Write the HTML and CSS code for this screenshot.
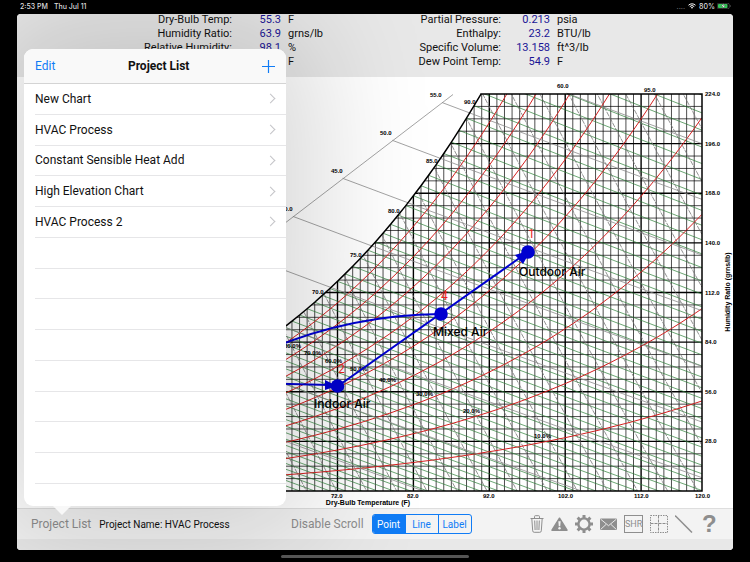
FILE: index.html
```html
<!DOCTYPE html>
<html lang="en">
<head>
    <meta charset="UTF-8">
    <meta name="viewport" content="width=device-width, initial-scale=1.0">
    <title>Psychrometric Chart</title>
    <link rel="stylesheet" href="styles.css">
    <script src="chart.js" defer></script>
</head>
<body>

<div class="status-bar">
    <span>2:53 PM</span>
    <span>Thu Jul 11</span>
    <span class="signal">....</span>
    <svg class="wifi" viewBox="0 0 16 12" aria-hidden="true">
        <path d="M1 4.5a10 10 0 0 1 14 0M3.5 7.2a6.4 6.4 0 0 1 9 0" fill="none" stroke="#fff" stroke-width="2"/>
        <path d="M5.6 9.2a3.4 3.4 0 0 1 4.8 0L8 11.7z" fill="#fff"/>
    </svg>
    <span>80%</span>
    <svg class="battery" viewBox="0 0 28 12" aria-hidden="true">
        <rect x="0.5" y="0.5" width="24" height="11" rx="3" fill="none" stroke="#777"/>
        <rect x="2" y="2" width="19" height="8" rx="1.5" fill="#35c759"/>
        <path d="M26 4v4a2.5 2.5 0 0 0 0-4z" fill="#777"/>
        <path d="M14 0.5L8 6.8h4L10.5 11.5 17 5.2h-4z" fill="#fff" stroke="#000" stroke-width="0.6"/>
    </svg>
</div>

<main class="app">
    <header class="readout">
        <table class="readings">
            <tr><th scope="row">Dry-Bulb Temp:</th><td class="value">55.3</td><td class="unit">F</td></tr>
            <tr><th scope="row">Humidity Ratio:</th><td class="value">63.9</td><td class="unit">grns/lb</td></tr>
            <tr><th scope="row">Relative Humidity:</th><td class="value">98.1</td><td class="unit">%</td></tr>
            <tr><td></td><td class="value"></td><td class="unit">F</td></tr>
        </table>
        <table class="readings readings-right">
            <tr><th scope="row">Partial Pressure:</th><td class="value">0.213</td><td class="unit">psia</td></tr>
            <tr><th scope="row">Enthalpy:</th><td class="value">23.2</td><td class="unit">BTU/lb</td></tr>
            <tr><th scope="row">Specific Volume:</th><td class="value">13.158</td><td class="unit">ft^3/lb</td></tr>
            <tr><th scope="row">Dew Point Temp:</th><td class="value">54.9</td><td class="unit">F</td></tr>
        </table>
    </header>

    <section class="chart-area">
        <svg id="chart" class="chart" viewBox="17 77 716 431" role="img" aria-label="Psychrometric chart">
            <defs>
                <clipPath id="inside"><path id="insidePath"/></clipPath>
            </defs>
            <!-- lines are filled in by chart.js -->
            <g clip-path="url(#inside)">
                <path id="gridMinor" class="grid-minor"/>
                <path id="gridMajor" class="grid-major"/>
                <path id="wetBulb" class="wet-bulb"/>
                <path id="volume" class="volume"/>
                <path id="humidity" class="humidity"/>
            </g>
            <path id="enthalpy" class="enthalpy"/>
            <path class="enthalpy-axis" d="M193 293.5L453 94.5"/>
            <path id="border" class="border"/>
            <g id="labels" class="labels"></g>
            <text class="axis-title" x="368" y="505" text-anchor="middle">Dry-Bulb Temperature (F)</text>
            <text class="axis-title" transform="translate(730 292) rotate(-90)" text-anchor="middle">Humidity Ratio (grns/lb)</text>

            <!-- process -->
            <g class="process">
                <path d="M338 386L528 252"/>
                <path d="M270 349Q350 315 441 314"/>
                <path d="M270 383.5L330 385"/>
            </g>
            <g class="process-points">
                <path d="M515 255l8 9 8-14z"/>
                <path d="M325 380v10l12-4z"/>
                <circle cx="528" cy="252" r="6.8"/>
                <circle cx="441" cy="314" r="6.8"/>
                <circle cx="337.5" cy="386" r="6.8"/>
            </g>
            <g class="point-number">
                <text x="528" y="238">1</text>
                <text x="441" y="300">4</text>
                <text x="338" y="373">2</text>
            </g>
            <g class="point-name">
                <text x="519" y="276">Outdoor Air</text>
                <text x="433" y="336">Mixed Air</text>
                <text x="314" y="408">Indoor Air</text>
            </g>
        </svg>
    </section>

    <footer class="toolbar">
        <div class="project">
            <button class="text-button" type="button">Project List</button>
            <span class="project-name">Project Name: HVAC Process</span>
        </div>
        <button class="text-button" type="button">Disable Scroll</button>
        <div class="segmented">
            <button class="segment selected" type="button">Point</button>
            <button class="segment" type="button">Line</button>
            <button class="segment" type="button">Label</button>
        </div>
        <div class="tools">
            <button type="button" aria-label="Delete">
                <svg width="14" height="18" viewBox="0 0 14 18" fill="none" stroke="#8e8e8e">
                    <path d="M0.5 3.5h13M4.5 3.5V1.5q0-.8.8-.8h3.4q.8 0 .8.8v2M1.8 3.5l.9 12.3q.1 1.5 1.5 1.5h5.6q1.4 0 1.5-1.5l.9-12.3"/>
                    <path d="M4.7 5.5l.4 9.5M7 5.5V15M9.3 5.5L8.9 15"/>
                </svg>
            </button>
            <button type="button" aria-label="Warnings">
                <svg width="17" height="18" viewBox="0 0 17 18">
                    <path d="M8.5 3.2L16 15.2H1z" fill="#8e8e8e" stroke="#8e8e8e" stroke-width="1.5" stroke-linejoin="round"/>
                    <path d="M7.3 6.2h2.4l-.5 5.1H7.8z" fill="#f3f3f3"/>
                    <circle cx="8.5" cy="13.3" r="1.2" fill="#f3f3f3"/>
                </svg>
            </button>
            <button type="button" aria-label="Settings">
                <svg width="18" height="18" viewBox="0 0 18 18" stroke="#8e8e8e" fill="none">
                    <circle cx="9" cy="9" r="5.6" stroke-width="2.4"/>
                    <path stroke-width="3" d="M9 0v3M9 15v3M0 9h3M15 9h3M2.6 2.6l2.2 2.2M13.2 13.2l2.2 2.2M2.6 15.4l2.2-2.2M13.2 4.8l2.2-2.2"/>
                </svg>
            </button>
            <button type="button" aria-label="Mail">
                <svg width="17" height="18" viewBox="0 0 17 18">
                    <rect x="0" y="3.5" width="17" height="11.5" rx="1" fill="#8e8e8e"/>
                    <path d="M.8 4.3l7.7 6.4 7.7-6.4M.8 14.3l5.4-5M16.2 14.3l-5.4-5" fill="none" stroke="#f3f3f3" stroke-width=".9"/>
                </svg>
            </button>
            <button class="shr" type="button">SHR</button>
            <button type="button" aria-label="Grid">
                <svg width="18" height="18" viewBox="0 0 18 18" fill="none" stroke="#8e8e8e">
                    <path stroke-dasharray="1.5 1" d="M.5.5h17v17H.5z"/>
                    <path stroke-dasharray="3 1" d="M8.5 .5v17M.5 8.5h17"/>
                </svg>
            </button>
            <button type="button" aria-label="Draw line">
                <svg width="20" height="18" viewBox="0 0 20 18"><path d="M0 .5l17 17" stroke="#8e8e8e" stroke-width="1.5"/></svg>
            </button>
            <button class="help" type="button">?</button>
        </div>
    </footer>

    <aside class="popover">
        <div class="popover-header">
            <button class="edit" type="button">Edit</button>
            <h1>Project List</h1>
            <button class="add" type="button" aria-label="Add project">
                <svg width="13" height="13" viewBox="0 0 13 13"><path d="M6.5 0v13M0 6.5h13" stroke="#107cf6" stroke-width="1.2"/></svg>
            </button>
        </div>
        <ul class="project-list">
            <li><a href="#">New Chart</a></li>
            <li><a href="#">HVAC Process</a></li>
            <li><a href="#">Constant Sensible Heat Add</a></li>
            <li><a href="#">High Elevation Chart</a></li>
            <li><a href="#">HVAC Process 2</a></li>
            <li></li>
            <li></li>
            <li></li>
            <li></li>
            <li></li>
            <li></li>
            <li></li>
            <li></li>
        </ul>
    </aside>
</main>

<div class="home-indicator"></div>

</body>
</html>
```
FILE: styles.css
```css
* {
    box-sizing: border-box;
}

body {
    margin: 0;
    min-height: 100vh;
    background: #000;
    font-family: Roboto, "Liberation Sans", sans-serif;
    color: #111;
    display: flex;
    flex-direction: column;
}

button {
    padding: 0;
    border: none;
    background: none;
    font-family: inherit;
    color: #8e8e8e;
}

svg {
    display: block;
}

/* status bar */
.status-bar {
    height: 14px;
    padding: 0 19px 2px 20px;
    display: flex;
    align-items: center;
    gap: 6px;
    font-family: Inter, "Liberation Sans", sans-serif;
    font-size: 7px;
    font-weight: 500;
    color: #ddd;
}

.signal {
    margin-left: auto;
    color: #777;
}

.wifi {
    width: 8px;
    margin: 0 -3px;
}

.battery {
    width: 14px;
    margin-left: -4px;
}

/* app window */
.app {
    position: relative;
    flex: 1;
    margin: 0 17px;
    background: #fff;
    border-radius: 4px;
    overflow: hidden;
    display: flex;
    flex-direction: column;
}

.readout {
    height: 63px;
    display: flex;
    background: #e8e8e8;
}

.readings {
    width: 50%;
    height: 56px;
    table-layout: fixed;
    border-collapse: collapse;
    font-size: 11px;
    line-height: 11px;
}

.readings th,
.readings td {
    height: 14px;
    padding: 0;
    font-weight: 400;
    text-align: right;
    vertical-align: top;
    white-space: nowrap;
}

.readings th {
    width: 215px;
}

.readings-right th {
    width: 126px;
}

.readings .value {
    width: 49px;
    color: #1a1596;
}

.readings .unit {
    padding-left: 7px;
    text-align: left;
}

/* chart */
.chart-area {
    flex: 1;
}

.chart {
    width: 100%;
}

.chart path {
    fill: none;
}

#insidePath {
    fill: #000;
}

.grid-minor {
    stroke: #000;
    stroke-width: 0.7;
}

.grid-major {
    stroke: #000;
    stroke-width: 1.4;
}

.wet-bulb {
    stroke: #2c8038;
    stroke-width: 0.7;
}

.volume {
    stroke: #777;
    stroke-width: 0.8;
    stroke-dasharray: 5 1;
}

.enthalpy,
.enthalpy-axis {
    stroke: #8b8b8b;
    stroke-width: 0.8;
}

.humidity {
    stroke: #d42020;
    stroke-width: 1;
}

.border {
    stroke: #000;
    stroke-width: 1.5;
}

.labels {
    font: bold 6px "Liberation Sans", sans-serif;
}

.axis-title {
    font: bold 7px "Liberation Sans", sans-serif;
}

.process path {
    stroke: #0000d0;
    stroke-width: 2;
}

.chart .process-points path,
.process-points circle {
    fill: #0000d0;
}

.point-number {
    font-size: 12px;
    fill: #ee2222;
}

.point-name {
    font-family: Inter, "Liberation Sans", sans-serif;
    font-size: 12px;
    font-weight: 500;
}

/* toolbar */
.toolbar {
    height: 42px;
    padding: 0 18px 0 14px;
    display: flex;
    align-items: center;
    background: #f3f3f3;
    border-top: 1px solid #dedede;
    border-bottom: 11px solid #e8e8e8;
}

.project {
    width: 260px;
    display: flex;
    align-items: center;
    gap: 8px;
}

.text-button {
    font-size: 12px;
}

.project-name {
    font-size: 10px;
}

.segmented {
    width: 100px;
    height: 20px;
    margin-left: 8px;
    display: flex;
    border: 1px solid #107cf6;
    border-radius: 3px;
    overflow: hidden;
}

.segment {
    flex: 1;
    font-size: 10px;
    color: #107cf6;
}

.segment + .segment {
    border-left: 1px solid #107cf6;
}

.segment.selected {
    background: #107cf6;
    color: #fff;
}

.tools {
    margin-left: auto;
    display: flex;
    align-items: center;
    gap: 7px;
}

.shr {
    width: 19px;
    height: 18px;
    border: 1px solid #8e8e8e;
    font-size: 9px;
}

.help {
    width: 13px;
    font-family: "Liberation Sans", sans-serif;
    font-size: 24px;
    line-height: 24px;
    font-weight: bold;
}

/* popover */
.popover {
    position: absolute;
    top: 35px;
    bottom: 44px;
    left: 7px;
    width: 262px;
    display: flex;
    flex-direction: column;
    background: #fff;
    border-radius: 9px;
    box-shadow: 0 0 120px 30px rgba(0, 0, 0, 0.16);
}

.popover::after {
    content: "";
    position: absolute;
    top: 100%;
    left: 29px;
    border: 9px solid transparent;
    border-top-color: #f8f8f8;
    border-bottom: none;
}

.popover-header {
    height: 35px;
    padding: 0 11px;
    display: flex;
    align-items: center;
    justify-content: space-between;
    background: #f9f9f9;
    border-bottom: 1px solid #d4d4d4;
    border-radius: 9px 9px 0 0;
}

.popover-header h1 {
    margin: 0;
    font-size: 12px;
    font-weight: 700;
}

.edit {
    font-size: 12px;
    color: #107cf6;
}

.project-list {
    flex: 1;
    margin: 0;
    padding: 0 0 22px 11px;
    list-style: none;
    display: flex;
    flex-direction: column;
}

.project-list li {
    flex: 1;
    display: flex;
    align-items: center;
    border-bottom: 1px solid #e6e6e8;
}

.project-list a {
    flex: 1;
    display: flex;
    align-items: center;
    justify-content: space-between;
    padding-right: 12px;
    font-size: 12px;
    color: #111;
    text-decoration: none;
}

.project-list a::after {
    content: "";
    width: 6px;
    height: 6px;
    border: solid #c4c4c8;
    border-width: 1px 1px 0 0;
    transform: rotate(45deg);
}

.home-indicator {
    width: 188px;
    height: 3px;
    margin: 5px auto 4px;
    border-radius: 2px;
    background: #555;
}
```
FILE: chart.js
```js
const P = 14.696; // sea level pressure, psia
const X72 = 337.5, PX_F = 7.59;
const BOTTOM = 491, TOP = 94, RIGHT = 702;
const PX_GR = (BOTTOM - TOP) / 224;

const px = t => X72 + (t - 72) * PX_F;
const tempAt = x => 72 + (x - X72) / PX_F;
const py = w => BOTTOM - w * 7000 * PX_GR;

// saturation pressure of water, t in F
function satPressure(t) {
    const r = t + 459.67;
    return Math.exp(-10440.397 / r - 11.29465 - 0.027022355 * r + 1.289036e-5 * r * r
        - 2.4780681e-9 * r * r * r + 6.5459673 * Math.log(r));
}

function ratio(t, rh) {
    const pw = satPressure(t) * rh;
    return 0.62198 * pw / (P - pw);
}

function curve(from, to, fn, step = 1) {
    const pts = [];
    for (let t = from; t < to; t += step) {
        pts.push(px(t).toFixed(1) + " " + py(fn(t)).toFixed(1));
    }
    pts.push(px(to).toFixed(1) + " " + py(fn(to)).toFixed(1));
    return "M" + pts.join("L");
}

function draw(id, d) {
    document.getElementById(id).setAttribute("d", d);
}

const tSat = tempAt(481);
const saturation = curve(35, tSat, t => ratio(t, 1));
const outline = saturation + `L481 ${TOP}H${RIGHT}V${BOTTOM}H${px(35)}Z`;
draw("insidePath", outline);
draw("border", outline);

// temperature and humidity ratio grid
let minor = "", major = "";
for (let t = 36; t < 120; t++) {
    const line = `M${px(t)} ${TOP}V${BOTTOM}`;
    if (t % 10 === 2) major += line; else minor += line;
}
for (let g = 7; g < 224; g += 7) {
    const line = `M${px(35)} ${BOTTOM - g * PX_GR}H${RIGHT}`;
    if (g % 28 === 0) major += line; else minor += line;
}
draw("gridMinor", minor);
draw("gridMajor", major);

// relative humidity
let rhLines = "";
for (let rh = 1; rh < 10; rh++) {
    rhLines += curve(35, 120, t => ratio(t, rh / 10));
}
draw("humidity", rhLines);

// wet bulb
let wbLines = "";
for (let wb = 36; wb < 100; wb++) {
    const ws = ratio(wb, 1);
    wbLines += curve(wb, 120, t => ((1093 - 0.556 * wb) * ws - 0.24 * (t - wb)) / (1093 + 0.444 * t - wb), 10);
}
draw("wetBulb", wbLines);

// specific volume
let volLines = "";
for (let v = 125; v < 156; v++) {
    const w = t => (v / 10 * P / (0.370486 * (t + 459.67)) - 1) / 1.607858;
    volLines += curve(35, 120, w, 5);
}
draw("volume", volLines);

// enthalpy, starts on the slanted axis
let hLines = "";
for (let h = 20; h <= 60; h += 5) {
    const w = t => (h - 0.24 * t) / (1061 + 0.444 * t);
    const start = h === 60 ? 102.2 : tempAt(442 - (55 - h) * 9.94);
    const end = Math.min(120, h / 0.24);
    hLines += curve(start, end, w, 10);
}
draw("enthalpy", hLines);

const labels = [
    ["224.0", 705, 96], ["196.0", 705, 146], ["168.0", 705, 195], ["140.0", 705, 245],
    ["112.0", 705, 295], ["84.0", 705, 344], ["56.0", 705, 394], ["28.0", 705, 443],
    ["72.0", 331, 498], ["82.0", 407, 498], ["92.0", 483, 498], ["102.0", 558, 498],
    ["112.0", 634, 498], ["120.0", 695, 498],
    ["60.0", 557, 88], ["95.0", 644, 92],
    ["55.0", 430, 97], ["50.0", 380, 135], ["45.0", 331, 173], ["40.0", 281, 211],
    ["90.0", 464, 104], ["85.0", 426, 163], ["80.0", 388, 213], ["75.0", 350, 257], ["70.0", 312, 294],
    ["80.0%", 284, 348], ["70.0%", 304, 355], ["60.0%", 325, 363], ["50.0%", 350, 371],
    ["40.0%", 379, 382], ["30.0%", 416, 396], ["20.0%", 463, 413], ["10.0%", 534, 438]
];
const group = document.getElementById("labels");
labels.forEach(([text, x, y]) => {
    const el = document.createElementNS("http://www.w3.org/2000/svg", "text");
    el.setAttribute("x", x);
    el.setAttribute("y", y);
    el.textContent = text;
    group.appendChild(el);
});
```
